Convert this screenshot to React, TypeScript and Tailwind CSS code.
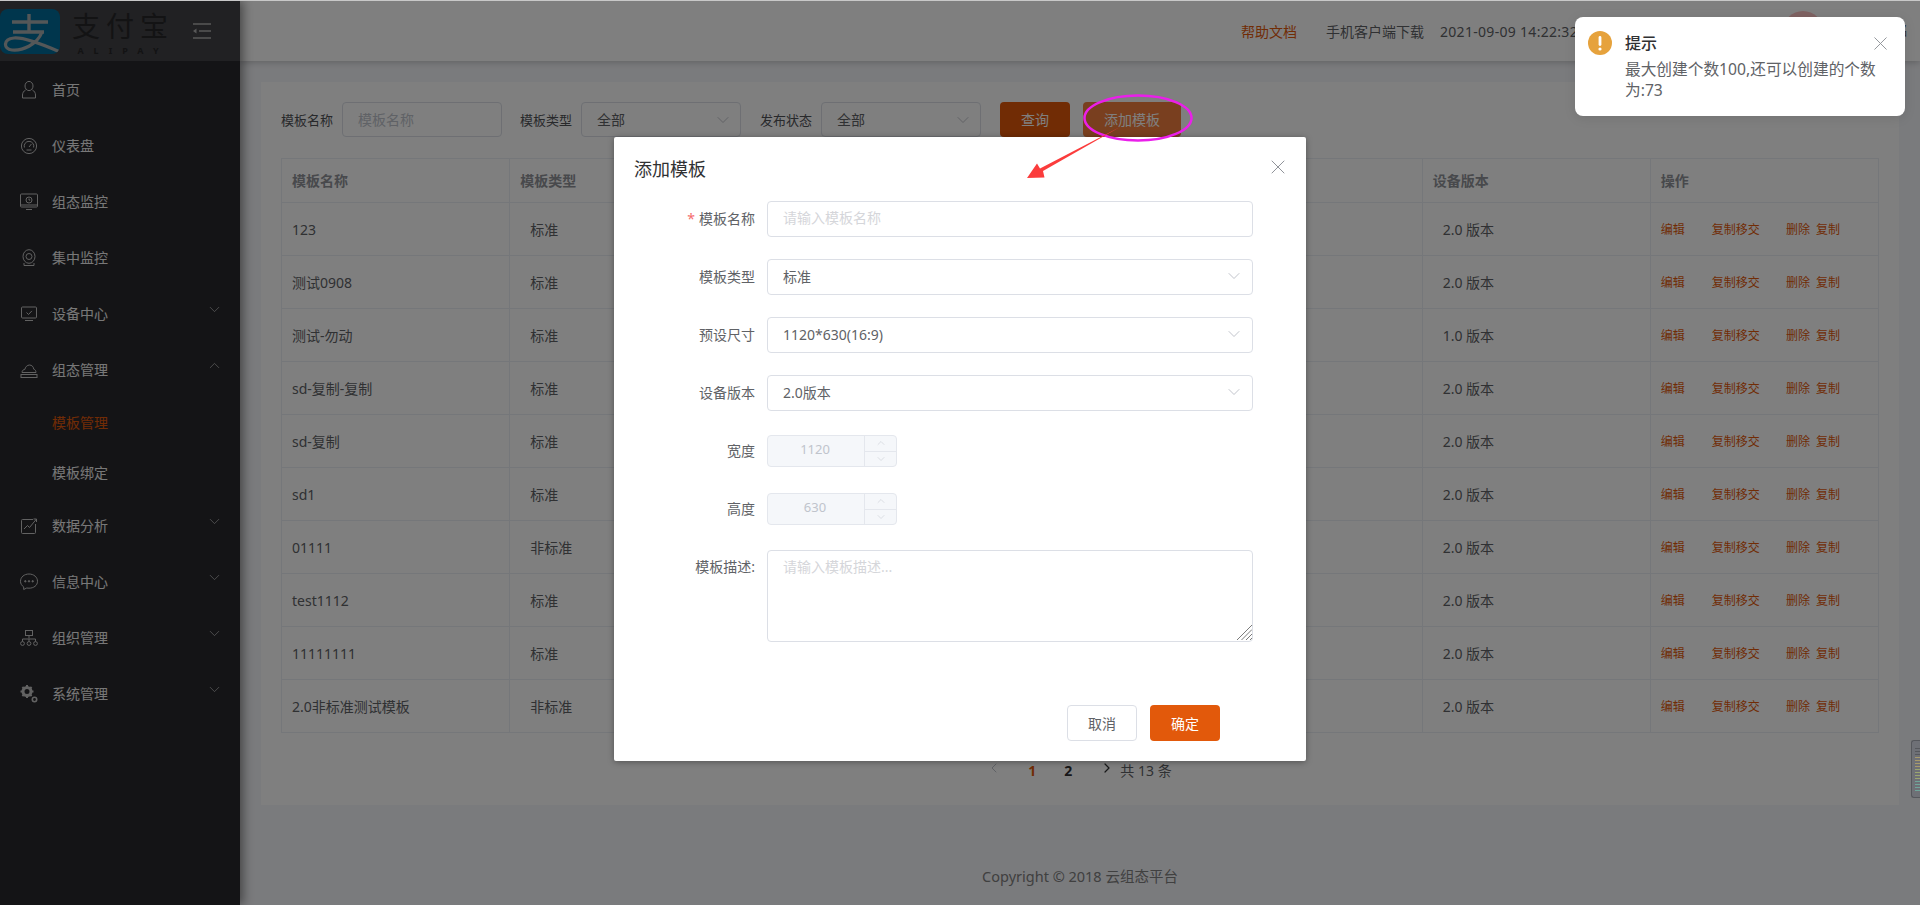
import React from "react";
import { ChevronDown, ChevronUp, ChevronLeft, ChevronRight, X } from "lucide-react";

const S = (p: { children: React.ReactNode }) => (
  <svg width="20" height="20" viewBox="0 0 20 20" fill="none" stroke="currentColor" strokeWidth="1" className="shrink-0">
    {p.children}
  </svg>
);

const icons: Record<string, React.ReactNode> = {
  home: (
    <S>
      <ellipse cx="10" cy="6" rx="4" ry="4.6" />
      <path d="M6.6 10c-2 1-3.1 3-3.1 5v3h13v-3c0-2-1.1-4-3.1-5" />
    </S>
  ),
  gauge: (
    <S>
      <circle cx="10" cy="10" r="7.6" />
      <path d="M5.400 11.500a4.800 4.800 0 1 1 9.200 0" />
      <path d="M10 11l2.400-3" />
      <path d="M7.500 14h5" />
    </S>
  ),
  screen: (
    <S>
      <rect x="1.500" y="2" width="17" height="13" rx="1" />
      <circle cx="10" cy="8" r="3" />
      <path d="M10 6.500v1.600h1.200M7 17.500h6M1.500 13h17" />
    </S>
  ),
  cam: (
    <S>
      <ellipse cx="10" cy="8.500" rx="6" ry="6.800" />
      <circle cx="10" cy="8.500" r="3" />
      <path d="M5 15v2.500h10V15" />
    </S>
  ),
  device: (
    <S>
      <rect x="2.500" y="3" width="15" height="11" rx="1" />
      <path d="M7.500 8.500l2 2 3.400-3.600M6 16.500h8" />
    </S>
  ),
  cloud: (
    <S>
      <path d="M3 12.500c0-2 1.400-3 2.800-3 .4-2.400 2.400-4.500 4.700-4.500s4 1.800 4.300 4.200c1.200.2 2.200 1.600 2.200 3.300z" />
      <rect x="2" y="14.500" width="16" height="3" />
    </S>
  ),
  chart: (
    <S>
      <path d="M14 3.500H3.500a1 1 0 0 0-1 1v12a1 1 0 0 0 1 1h12a1 1 0 0 0 1-1V8" />
      <path d="M5 13l3.500-3.500 2 2L17.500 3M14.500 3h3v3" />
    </S>
  ),
  msg: (
    <S>
      <path d="M10 2c-4.700 0-8.500 3-8.500 7.300 0 2.400 1.200 4.300 3.200 5.600v2.600l3-1.500c.7.1 1.500.2 2.300.2 4.700 0 8.500-2.700 8.500-6.900S14.700 2 10 2z" />
      <circle cx="6.300" cy="9.300" r=".7" fill="currentColor" />
      <circle cx="10" cy="9.300" r=".7" fill="currentColor" />
      <circle cx="13.700" cy="9.300" r=".7" fill="currentColor" />
    </S>
  ),
  org: (
    <S>
      <rect x="6.500" y="2.500" width="7" height="5" />
      <path d="M10 7.500v3M3.500 13.500v-2.500h13v2.500M10 11v2.500" />
      <circle cx="3.500" cy="15.500" r="1.900" />
      <circle cx="10" cy="15.500" r="1.900" />
      <circle cx="16.500" cy="15.500" r="1.900" />
    </S>
  ),
  gear: (
    <svg width="20" height="20" viewBox="0 0 20 20" className="shrink-0">
      <circle cx="8" cy="7.500" r="4" fill="none" stroke="currentColor" strokeWidth="3" />
      <path d="M8 1v3M8 11v3M1.500 7.500h3M11.500 7.500h3M3.400 3l2.100 2.100M10.500 10l2.100 2.100M12.600 3l-2.100 2.100M5.500 10l-2.100 2.100" stroke="currentColor" strokeWidth="2" />
      <circle cx="15.500" cy="15.500" r="2.200" fill="none" stroke="currentColor" strokeWidth="1.600" />
    </svg>
  ),
};

const menu: { k: string; t: string; c?: "d" | "u" }[] = [
  { k: "home", t: "首页" },
  { k: "gauge", t: "仪表盘" },
  { k: "screen", t: "组态监控" },
  { k: "cam", t: "集中监控" },
  { k: "device", t: "设备中心", c: "d" },
  { k: "cloud", t: "组态管理", c: "u" },
];
const menu2: { k: string; t: string; c?: "d" | "u" }[] = [
  { k: "chart", t: "数据分析", c: "d" },
  { k: "msg", t: "信息中心", c: "d" },
  { k: "org", t: "组织管理", c: "d" },
  { k: "gear", t: "系统管理", c: "d" },
];

function MenuItem({ k, t, c }: { k: string; t: string; c?: "d" | "u" }) {
  return (
    <div className="h-[56px] pt-px flex items-center pl-[19px] pr-[17px] text-[14px] text-[#f0f0f0]">
      <span className="text-[#c4c4c4] w-[33px]">{icons[k]}</span>
      <span className="flex-1">{t}</span>
      {c === "d" && <ChevronDown size={17} strokeWidth={1} className="text-[#c4c4c4] -mt-[8px]" />}
      {c === "u" && <ChevronUp size={17} strokeWidth={1} className="text-[#c4c4c4] -mt-[8px]" />}
    </div>
  );
}

const rows: [string, string, string][] = [
  ["123", "标准", "2.0 版本"],
  ["测试0908", "标准", "2.0 版本"],
  ["测试-勿动", "标准", "1.0 版本"],
  ["sd-复制-复制", "标准", "2.0 版本"],
  ["sd-复制", "标准", "2.0 版本"],
  ["sd1", "标准", "2.0 版本"],
  ["01111", "非标准", "2.0 版本"],
  ["test1112", "标准", "2.0 版本"],
  ["11111111", "标准", "2.0 版本"],
  ["2.0非标准测试模板", "非标准", "2.0 版本"],
];

function FilterSelect({ label, value }: { label: string; value: string }) {
  return (
    <>
      <span className="text-[13px] pt-[2px] text-[#505257] w-[52px] whitespace-nowrap mr-[9px]">{label}</span>
      <div className="w-[160px] h-[35px] border border-[#dcdfe6] rounded-[4px] flex items-center justify-between pl-[15px] pr-[7px] text-[14px] text-[#606266] mr-[19px]">
        <span>{value}</span>
        <ChevronDown size={20} strokeWidth={1} className="text-[#b4b8c0]" />
      </div>
    </>
  );
}

function FormSelect({ label, value }: { label: string; value: string }) {
  return (
    <div className="flex items-center mb-[22px]">
      <label className="w-[141px] mr-[12px] pb-[2px] text-right text-[14px] text-[#606266]">{label}</label>
      <div className="w-[486px] h-[36px] pb-[2px] border border-[#dcdfe6] rounded-[4px] flex items-center justify-between pl-[15px] pr-[8px] text-[14px] text-[#606266]">
        <span>{value}</span>
        <ChevronDown size={20} strokeWidth={1} className="text-[#b4b8c0]" />
      </div>
    </div>
  );
}

function NumberRow({ label, value }: { label: string; value: string }) {
  return (
    <div className="flex items-center h-[36px] mb-[22px]">
      <label className="w-[141px] mr-[12px] pb-[2px] text-right text-[14px] text-[#606266]">{label}</label>
      <div className="w-[130px] h-[32px] border border-[#e4e7ed] bg-[#f5f7fa] rounded-[4px] flex text-[13px] text-[#c0c4cc]">
        <div className="w-[96px] pr-[2px] pb-[2px] flex items-center justify-center">{value}</div>
        <div className="flex-1 border-l border-[#e4e7ed] flex flex-col">
          <div className="flex-1 border-b border-[#e4e7ed] flex items-center justify-center">
            <ChevronUp size={12} strokeWidth={1} />
          </div>
          <div className="flex-1 flex items-center justify-center">
            <ChevronDown size={12} strokeWidth={1} />
          </div>
        </div>
      </div>
    </div>
  );
}

export default function App() {
  return (
    <div className="relative w-[1920px] h-[905px] overflow-hidden font-['Noto_Sans','Noto_Sans_CJK_SC',sans-serif] bg-[#f5f6fa]">
      <div className="relative z-[70] h-px bg-[#c8c8c8]" />
      <div className="flex h-[904px]">
        <aside className="relative z-10 w-[240px] shrink-0 bg-[#28282c] shadow-[3px_0_10px_rgba(0,0,0,0.45)]">
          <div className="h-[60px] bg-[#424246] flex items-center">
            <div className="relative z-[60] w-[60px] h-[45px] rounded-lg bg-[#006d9a] overflow-hidden">
              <svg viewBox="0 0 60 45" width="60" height="45" fill="none" stroke="#a9aeb0" strokeWidth="3.400">
                <path d="M12 13h36M29 5v18M13 23h31" />
                <path d="M42 23C37 36 22 42 12 41 3 40 3 30 14 29c11-1 30 7 46 14" strokeWidth="3.200" />
              </svg>
            </div>
            <div className="relative z-[60] ml-[8px] w-[110px] flex flex-col items-center text-[#262628]">
              <span className="text-[28px] leading-[40px] tracking-[6px]">支付宝</span>
              <span className="text-[9px] leading-[10px] tracking-[10px] font-bold">ALIPAY</span>
            </div>
            <svg width="18" height="16" viewBox="0 0 18 16" fill="none" stroke="#b0b0b0" strokeWidth="1.300" className="ml-[15px]">
              <path d="M0 1h18M6 8h12M0 15h18" />
              <path d="M0 8l3.500-2.500v5z" fill="#b0b0b0" stroke="none" />
            </svg>
          </div>
          <nav>
            {menu.map((m) => (
              <MenuItem key={m.t} {...m} />
            ))}
            <div className="h-[50px] pl-[52px] flex items-center text-[14px] text-[#e2590b]">模板管理</div>
            <div className="h-[50px] pl-[52px] flex items-center text-[14px] text-[#f0f0f0]">模板绑定</div>
            {menu2.map((m) => (
              <MenuItem key={m.t} {...m} />
            ))}
          </nav>
        </aside>
        <div className="flex-1 flex flex-col min-w-0">
          <header className="relative h-[60px] bg-white shadow-[0_2px_6px_rgba(0,0,0,0.18)] flex items-center justify-end pr-[12px] text-[14px] text-[#606266]">
            <span className="text-[#e2590b] mr-[29px]">帮助文档</span>
            <span className="mr-[16px]">手机客户端下载</span>
            <span className="w-[343px] whitespace-nowrap tracking-[0.3px]">2021-09-09 14:22:32</span>
            <span className="w-[40px] h-[40px] rounded-full bg-[#ffc4c4] mr-[15px]" />
            <span className="w-[70px] text-right text-[13px]">系统用户名</span>
          </header>
          <main className="flex-1 pt-[21px] px-[21px]">
            <section className="bg-white h-[723px] pt-[20px] pl-[20px] pr-[20px]">
              <div className="flex items-center h-[35px] mb-[21px]">
                <span className="text-[13px] pt-[2px] text-[#505257] w-[52px] whitespace-nowrap mr-[9px]">模板名称</span>
                <input
                  placeholder="模板名称"
                  className="w-[160px] h-[35px] border border-[#dcdfe6] rounded-[4px] px-[15px] text-[14px] placeholder:text-[#c0c4cc] mr-[18px] outline-none"
                />
                <FilterSelect label="模板类型" value="全部" />
                <FilterSelect label="发布状态" value="全部" />
                <button className="w-[70px] h-[35px] rounded-[4px] bg-[#e2590b] text-white text-[14px]">查询</button>
                <button className="ml-[13px] w-[98px] h-[35px] rounded-[4px] bg-[#f27e3e] text-white text-[14px]">添加模板</button>
              </div>
              <table className="w-[1598px] table-fixed border-collapse text-[14px] text-[#606266]">
                <thead>
                  <tr className="h-[44px] text-left text-[#909399]">
                    <th className="border border-[#ebeef5] pl-[10px] font-bold">模板名称</th>
                    <th className="border border-[#ebeef5] pl-[10px] font-bold">模板类型</th>
                    <th className="border border-[#ebeef5]" />
                    <th className="border border-[#ebeef5]" />
                    <th className="border border-[#ebeef5]" />
                    <th className="border border-[#ebeef5] pl-[10px] font-bold">设备版本</th>
                    <th className="border border-[#ebeef5] pl-[10px] font-bold">操作</th>
                  </tr>
                </thead>
                <tbody>
                  {rows.map((r, i) => (
                    <tr key={i} className="h-[53px]">
                      <td className="border border-[#ebeef5] pl-[10px]">{r[0]}</td>
                      <td className="border border-[#ebeef5] pl-[20px]">{r[1]}</td>
                      <td className="border border-[#ebeef5]" />
                      <td className="border border-[#ebeef5]" />
                      <td className="border border-[#ebeef5]" />
                      <td className="border border-[#ebeef5] pl-[20px]">{r[2]}</td>
                      <td className="border border-[#ebeef5] pl-[10px] pt-[2px] text-[12px] text-[#e2590b]">
                        <span className="mr-[27px]">编辑</span>
                        <span className="mr-[26px]">复制移交</span>
                        <span className="mr-[6px]">删除</span>
                        <span>复制</span>
                      </td>
                    </tr>
                  ))}
                </tbody>
              </table>
              <div className="mt-[21px] h-[32px] -ml-[2px] flex items-center justify-center text-[14px] text-[#606266]">
                <ChevronLeft size={16} strokeWidth={1.500} className="text-[#c0c4cc] -mt-[4px]" />
                <span className="w-[16px] ml-[22px] text-center font-bold text-[#e2590b]">1</span>
                <span className="w-[16px] ml-[20px] text-center font-bold text-[#303133]">2</span>
                <ChevronRight size={16} strokeWidth={1.800} className="ml-[23px] text-[#303133] -mt-[4px]" />
                <span className="ml-[5px]">共 13 条</span>
              </div>
            </section>
            <footer className="mt-[60px] h-[22px] text-center text-[14.5px] leading-[22px] text-[#808080]">
              Copyright © 2018 云组态平台
            </footer>
          </main>
        </div>
      </div>

      <div className="absolute inset-x-0 top-px bottom-0 z-50 bg-black/50" />

      <div className="absolute z-[55] left-[614px] top-[137px] w-[692px] h-[624px] bg-white rounded-[2px] shadow-[0_1px_6px_rgba(0,0,0,0.35)]">
        <div className="h-[64px] flex items-center justify-between pl-[20px] pr-[16px]">
          <span className="text-[18px] text-[#303133]">添加模板</span>
          <X size={24} strokeWidth={1} className="text-[#909399] -mt-[4px]" />
        </div>
        <div className="flex items-center mb-[22px]">
          <label className="w-[141px] mr-[12px] pb-[2px] text-right text-[14px] text-[#606266]">
            <span className="text-[#f56c6c] mr-[4px]">*</span>模板名称
          </label>
          <input
            placeholder="请输入模板名称"
            className="w-[486px] h-[36px] pb-[3px] border border-[#dcdfe6] rounded-[4px] px-[15px] text-[14px] placeholder:text-[#d5d6da] outline-none"
          />
        </div>
        <FormSelect label="模板类型" value="标准" />
        <FormSelect label="预设尺寸" value="1120*630(16:9)" />
        <FormSelect label="设备版本" value="2.0版本" />
        <NumberRow label="宽度" value="1120" />
        <NumberRow label="高度" value="630" />
        <div className="flex items-start">
          <label className="w-[141px] mr-[12px] mt-[7px] text-right text-[14px] text-[#606266]">模板描述:</label>
          <div className="relative mt-[1px] w-[486px] h-[92px]">
            <textarea
              placeholder="请输入模板描述..."
              className="block w-full h-full resize-none border border-[#dcdfe6] rounded-[4px] px-[15px] py-[5px] text-[14px] placeholder:text-[#d5d6da] outline-none"
            />
            <svg className="absolute right-[1px] bottom-[2px]" width="15" height="15" viewBox="0 0 15 15" stroke="#7a7a7a" strokeWidth="1">
              <path d="M0 15L15 0M4.500 15L15 4.500M9 15l6-6M13 15l2-2" />
            </svg>
          </div>
        </div>
        <div className="flex justify-end pr-[86px] mt-[63px]">
          <button className="w-[70px] h-[36px] border border-[#dcdfe6] rounded-[4px] text-[14px] text-[#606266] bg-white">取消</button>
          <button className="w-[70px] h-[36px] ml-[13px] rounded-[4px] text-[14px] text-white bg-[#e2590b]">确定</button>
        </div>
      </div>

      <div className="absolute z-[58] left-[1575px] top-[17px] w-[330px] h-[99px] bg-white rounded-[8px] shadow-[0_2px_12px_rgba(0,0,0,0.1)] flex pl-[13px] pt-[14px] pr-[26px]">
        <svg width="24" height="24" viewBox="0 0 24 24" className="shrink-0 mr-[13px]">
          <circle cx="12" cy="12" r="12" fill="#e6a23c" />
          <rect x="10.600" y="5" width="2.800" height="10" rx="1.400" fill="#fff" />
          <circle cx="12" cy="18" r="1.600" fill="#fff" />
        </svg>
        <div>
          <div className="text-[16px] leading-[24px] font-medium text-[#303133]">提示</div>
          <div className="mt-[4px] text-[15.7px] leading-[21px] text-[#606266]">最大创建个数100,还可以创建的个数为:73</div>
        </div>
        <X size={23} strokeWidth={1} className="absolute right-[13px] top-[15px] text-[#909399]" />
      </div>

      <svg className="absolute z-[60] inset-0 pointer-events-none" width="1920" height="905" fill="none">
        <ellipse cx="1138" cy="118" rx="53.500" ry="22.500" stroke="#ea1fea" strokeWidth="2.500" />
        <path d="M1120 127L1043 171L1044.500 177.500L1027 178L1037 163.500L1040 168.500Z" fill="#fb3c3c" />
      </svg>

      <div className="absolute z-[60] right-0 top-[740px] w-[9px] h-[58px] rounded-l-[3px] bg-[#6e7076] border border-r-0 border-[#55575c]">
        <svg width="8" height="56" viewBox="0 0 8 56" className="block">
          {Array.from({ length: 15 }).map((_, i) => (
            <rect
              key={i}
              x="3"
              y={7 + i * 3}
              width="5"
              height="1"
              fill={i < 3 ? "#55575c" : i < 7 ? "#a89a6a" : i < 11 ? "#9aa56f" : "#6fa59a"}
            />
          ))}
        </svg>
      </div>
    </div>
  );
}
